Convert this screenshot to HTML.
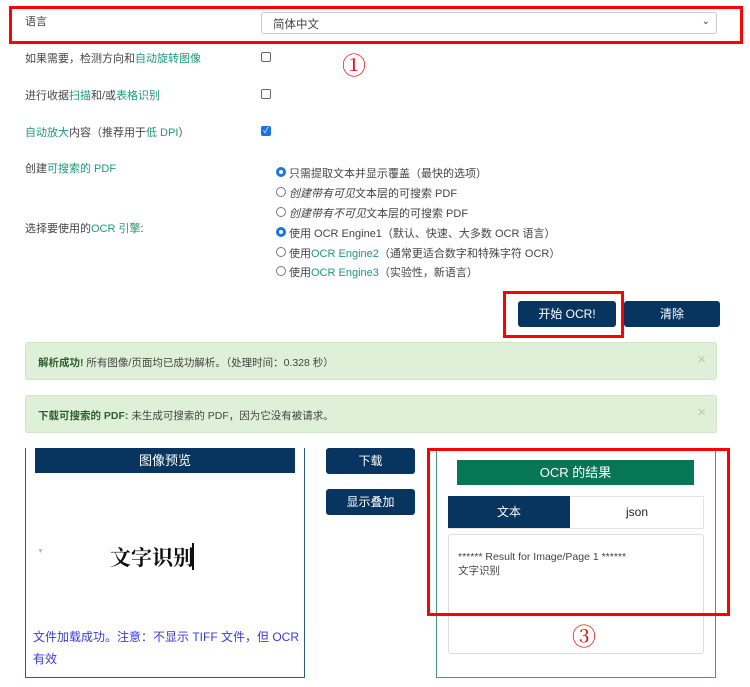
<!DOCTYPE html>
<html><head><meta charset="utf-8"><style>
*{box-sizing:border-box;margin:0;padding:0}
body{width:750px;height:687px;background:#fff;position:relative;font-family:"Liberation Sans","Noto Sans CJK SC",sans-serif;font-size:11px;color:#444;overflow:hidden}
.a{position:absolute;white-space:nowrap}
.g{color:#1a9a7a}
.red{position:absolute;border:3px solid #f00}
.cb{position:absolute;width:10px;height:10px;border:1px solid #666;border-radius:2px;background:#fff}
.rd{position:absolute;width:10px;height:10px;border:1px solid #777;border-radius:50%;background:#fff}
.rd.on{border:3px solid #1a73e8}
.btn{position:absolute;background:#07355f;color:#fff;border-radius:3px;text-align:center;font-size:12px}
.alert{position:absolute;left:25px;width:692px;height:38px;background:#dff0d8;border:1px solid #d0e6c4;border-radius:3px;color:#444;font-size:10.5px;padding:12px 0 0 12px}
.alert b{color:#2f5f2f}
.alert .x{position:absolute;right:10px;top:8px;color:#b8ccb0;font-size:15px}
.circ{position:absolute;color:#e00;font-size:24px;font-family:"Noto Serif CJK SC",serif}
</style></head><body>
<div class="red" style="left:9px;top:6px;width:734px;height:38px"></div>
<div class="a" style="left:25px;top:13px">语言</div>
<div class="a" style="left:261px;top:12px;width:456px;height:22px;border:1px solid #ccc;border-radius:3px;padding:3px 0 0 11px;font-size:11.5px">简体中文<span style="position:absolute;right:6px;top:3px;font-size:10px">&#8964;</span></div>
<div class="a" style="left:25px;top:50px">如果需要，检测方向和<span class="g">自动旋转图像</span></div>
<div class="cb" style="left:261px;top:52px"></div>
<div class="circ" style="left:342px;top:46px">①</div>
<div class="a" style="left:25px;top:87px">进行收据<span class="g">扫描</span>和/或<span class="g">表格识别</span></div>
<div class="cb" style="left:261px;top:89px"></div>
<div class="a" style="left:25px;top:124px"><span class="g">自动放大</span>内容（推荐用于<span class="g">低 DPI</span>）</div>
<div class="cb" style="left:261px;top:126px;background:#1a73e8;border-color:#1a73e8;color:#fff;font-size:8px;line-height:8px;text-align:center">✓</div>
<div class="a" style="left:25px;top:160px">创建<span class="g">可搜索的 PDF</span></div>
<div class="a" style="left:25px;top:220px">选择要使用的<span class="g">OCR 引擎</span>:</div>
<div class="rd on" style="left:276px;top:167px"></div><div class="a" style="left:289px;top:165px">只需提取文本并显示覆盖（最快的选项）</div>
<div class="rd" style="left:276px;top:187px"></div><div class="a" style="left:289px;top:185px"><i>创建带有可见</i>文本层的可搜索 PDF</div>
<div class="rd" style="left:276px;top:207px"></div><div class="a" style="left:289px;top:205px"><i>创建带有不可见</i>文本层的可搜索 PDF</div>
<div class="rd on" style="left:276px;top:227px"></div><div class="a" style="left:289px;top:225px">使用 OCR Engine1（默认、快速、大多数 OCR 语言）</div>
<div class="rd" style="left:276px;top:247px"></div><div class="a" style="left:289px;top:245px">使用<span class="g">OCR Engine2</span>（通常更适合数字和特殊字符 OCR）</div>
<div class="rd" style="left:276px;top:266px"></div><div class="a" style="left:289px;top:264px">使用<span class="g">OCR Engine3</span>（实验性，新语言）</div>
<div class="btn" style="left:518px;top:301px;width:98px;height:26px;line-height:26px">开始 OCR!</div>
<div class="btn" style="left:624px;top:301px;width:96px;height:26px;line-height:26px">清除</div>
<div class="red" style="left:503px;top:291px;width:121px;height:47px"></div>
<div class="circ" style="left:554px;top:338px">②</div>
<div class="alert" style="top:342px"><b>解析成功!</b> 所有图像/页面均已成功解析。（处理时间：0.328 秒）<span class="x">×</span></div>
<div class="alert" style="top:395px"><b>下载可搜索的 PDF:</b> 未生成可搜索的 PDF，因为它没有被请求。<span class="x">×</span></div>
<div class="a" style="left:25px;top:448px;width:280px;height:230px;border:1px solid #2d5a88;border-top:none"></div>
<div class="a" style="left:35px;top:448px;width:260px;height:25px;background:#07355f;color:#fff;font-size:13px;text-align:center;line-height:25px">图像预览</div>
<div class="a" style="left:37px;top:548px;color:#bbb;font-size:7px">▼</div>
<div class="a" style="left:110px;top:542px;font-family:'Liberation Serif','Noto Serif CJK SC',serif;font-weight:bold;font-size:21px;color:#111">文字识别</div>
<div class="a" style="left:192px;top:543px;width:2px;height:27px;background:#111"></div>
<div class="a" style="left:33px;top:626px;color:#3a3ae0;font-size:12px;line-height:22px;white-space:normal;width:268px">文件加载成功。注意：不显示 TIFF 文件，但 OCR 有效</div>
<div class="btn" style="left:326px;top:448px;width:89px;height:26px;line-height:26px">下载</div>
<div class="btn" style="left:326px;top:489px;width:89px;height:26px;line-height:26px">显示叠加</div>
<div class="a" style="left:436px;top:450px;width:280px;height:228px;border:1px solid #4a957a;border-top:none"></div>
<div class="a" style="left:457px;top:460px;width:237px;height:25px;background:#077654;color:#fff;font-size:13px;text-align:center;line-height:25px">OCR 的结果</div>
<div class="a" style="left:448px;top:496px;width:256px;height:33px;border:1px solid #e3e3e3"></div>
<div class="a" style="left:448px;top:496px;width:122px;height:32px;background:#07355f;color:#fff;font-size:12px;text-align:center;line-height:32px">文本</div>
<div class="a" style="left:570px;top:496px;width:134px;height:32px;color:#222;font-size:12px;text-align:center;line-height:32px">json</div>
<div class="a" style="left:448px;top:534px;width:256px;height:120px;border:1px solid #ddd;border-radius:3px;padding:15px 0 0 9px;font-size:10.5px;line-height:14px;color:#444">****** Result for Image/Page 1 ******<br>文字识别</div>
<div class="red" style="left:427px;top:448px;width:303px;height:168px"></div>
<div class="circ" style="left:572px;top:617px">③</div>
</body></html>
